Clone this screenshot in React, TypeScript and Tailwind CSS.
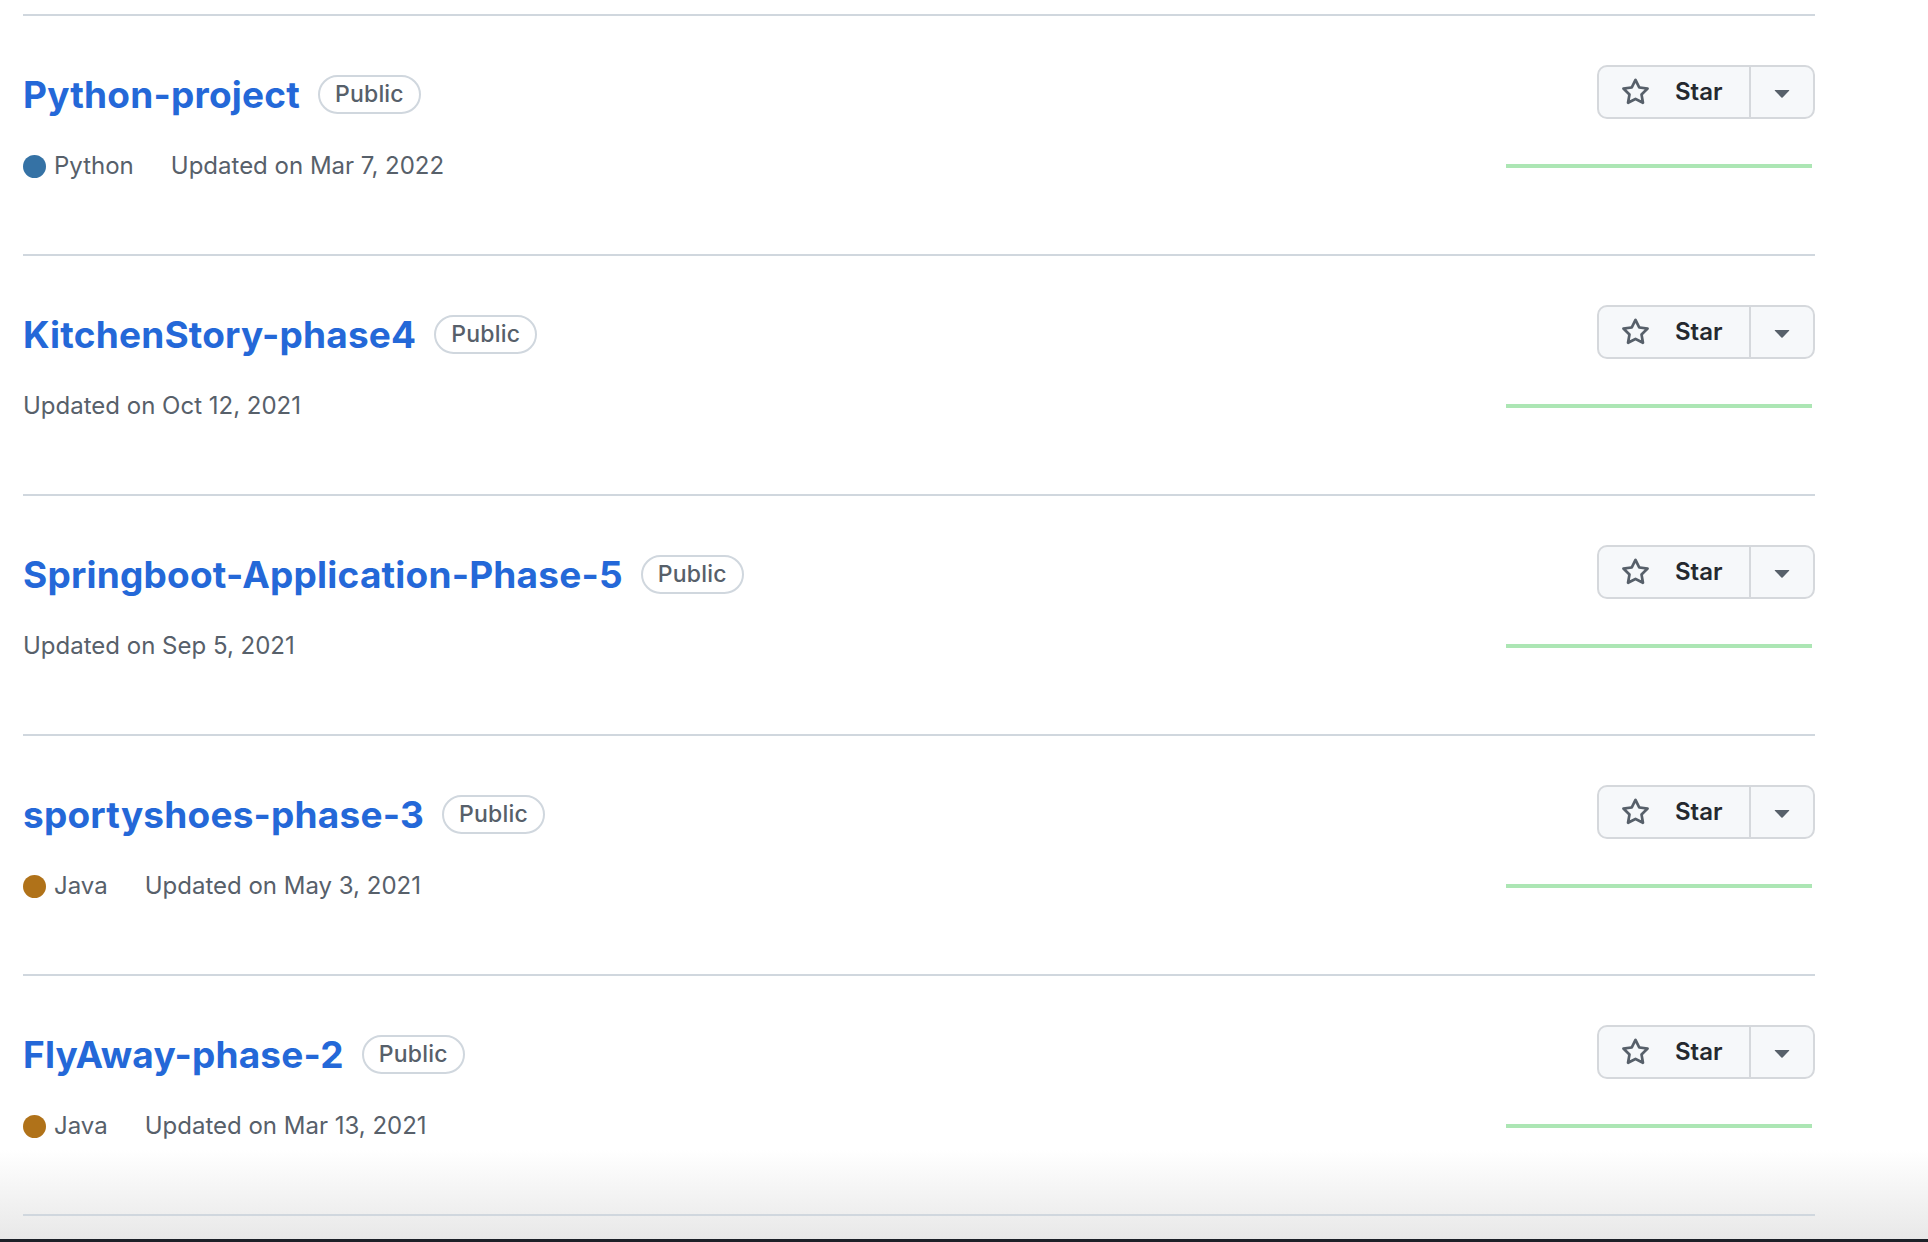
import React from "react";

type Repo = {
  name: string;
  lang?: { name: string; color: string };
  updated: string;
};

const repos: Repo[] = [
  { name: "Python-project", lang: { name: "Python", color: "#3572A5" }, updated: "Updated on Mar 7, 2022" },
  { name: "KitchenStory-phase4", updated: "Updated on Oct 12, 2021" },
  { name: "Springboot-Application-Phase-5", updated: "Updated on Sep 5, 2021" },
  { name: "sportyshoes-phase-3", lang: { name: "Java", color: "#b07219" }, updated: "Updated on May 3, 2021" },
  { name: "FlyAway-phase-2", lang: { name: "Java", color: "#b07219" }, updated: "Updated on Mar 13, 2021" },
];

function StarIcon() {
  return (
    <svg width="29" height="29" viewBox="0 0 16 16" fill="#57606a" aria-hidden="true">
      <path d="M8 .25a.75.75 0 0 1 .673.418l1.882 3.815 4.21.612a.75.75 0 0 1 .416 1.279l-3.046 2.97.719 4.192a.751.751 0 0 1-1.088.791L8 12.347l-3.766 1.98a.75.75 0 0 1-1.088-.79l.72-4.194L.818 6.374a.75.75 0 0 1 .416-1.28l4.21-.611L7.327.668A.75.75 0 0 1 8 .25Zm0 2.445L6.615 5.5a.75.75 0 0 1-.564.41l-3.097.45 2.24 2.184a.75.75 0 0 1 .216.664l-.528 3.084 2.769-1.456a.75.75 0 0 1 .698 0l2.77 1.456-.53-3.084a.75.75 0 0 1 .216-.664l2.24-2.183-3.096-.45a.75.75 0 0 1-.564-.41L8 2.694Z" />
    </svg>
  );
}

function CaretIcon() {
  return (
    <svg width="32" height="32" viewBox="0 0 16 16" fill="#57606a" aria-hidden="true">
      <path d="m4.427 7.427 3.396 3.396a.25.25 0 0 0 .354 0l3.396-3.396A.25.25 0 0 0 11.396 7H4.604a.25.25 0 0 0-.177.427Z" />
    </svg>
  );
}

function RepoRow({ repo }: { repo: Repo }) {
  return (
    <div className="h-[240px] border-b-2 border-[#d0d7de] pt-[49px] flex justify-between">
      <div className="flex flex-col">
        <div className="h-[54px] flex items-center">
          <a className="mt-[5px] text-[37px] leading-[44px] font-bold text-[#2468d8] tracking-[0.2px]">{repo.name}</a>
          <span className="mt-[5px] ml-[18px] h-[39px] px-[15px] flex items-center rounded-full border-2 border-[#d0d7de] text-[23px] tracking-[0.2px] font-medium text-[#57606a]">
            Public
          </span>
        </div>
        <div className="mt-[31px] h-[32px] flex items-center text-[24px] text-[#57606a]">
          {repo.lang && (
            <span className="flex items-center mr-[37px]">
              <span
                className="w-[23px] h-[23px] rounded-full mr-[8px]"
                style={{ backgroundColor: repo.lang.color }}
              />
              <span>{repo.lang.name}</span>
            </span>
          )}
          <span>{repo.updated}</span>
        </div>
      </div>
      <div className="flex flex-col items-end">
        <div className="h-[54px] w-[218px] flex rounded-[10px] border-2 border-[#d5d8dc] bg-[#f6f8fa] overflow-hidden">
          <button className="w-[150px] h-full flex items-center pl-[22px] text-[24px] font-semibold text-[#24292f]">
            <StarIcon />
            <span className="ml-[25px]">Star</span>
          </button>
          <div className="w-[2px] bg-[#d5d8dc]" />
          <button className="flex-1 h-full flex items-center justify-center">
            <CaretIcon />
          </button>
        </div>
        <div className="mt-[45px] mr-[3px] w-[306px] h-[4px] bg-[#ace6b4]" />
      </div>
    </div>
  );
}

export default function App() {
  return (
    <div
      className="w-[1928px] h-[1242px] overflow-hidden bg-[linear-gradient(to_bottom,#ffffff_0px,#ffffff_1150px,#e8e8e8_1239px,#1c2128_1239px,#1c2128_1242px)]"
      style={{ fontFamily: "Inter, 'Noto Sans', sans-serif" }}
    >
      <div className="ml-[23px] w-[1792px] pt-[14px]">
        <div className="border-t-2 border-[#d0d7de]">
          {repos.map((r) => (
            <RepoRow key={r.name} repo={r} />
          ))}
        </div>
      </div>
    </div>
  );
}
